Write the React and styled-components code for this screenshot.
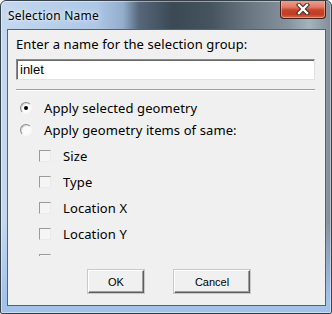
import React from "react";
import styled, { createGlobalStyle } from "styled-components";

const Global = createGlobalStyle`
  html, body { margin: 0; padding: 0; background: #fff; }
  body { width: 332px; height: 314px; overflow: hidden; }
`;

const Window = styled.div`
  box-sizing: border-box;
  width: 332px;
  height: 314px;
  border: 1px solid #36414c;
  border-radius: 6px 6px 2px 2px;
  display: flex;
  flex-direction: column;
  overflow: hidden;
  background:
    linear-gradient(to bottom, rgba(162, 194, 234, 0) 0, rgba(162, 194, 234, 0) 220px, rgba(162, 194, 234, 1) 300px),
    linear-gradient(to right, #c4d8ef 0, #adc7e6 95px, #93aecd 122px, #56677a 138px, #3b4955 172px, #465460 210px, #6b7883 250px, #8794a0 288px, #a7b2bb 308px, #7d8a96 332px);
  box-shadow: inset 0 0 0 1px rgba(255, 255, 255, 0.45);
`;

const TitleBar = styled.div`
  height: 28px;
  flex: none;
  display: flex;
  align-items: center;
  padding-left: 7px;
`;

const Title = styled.span`
  font-family: "Noto Sans", "Open Sans", sans-serif;
  font-size: 12px;
  letter-spacing: 0.2px;
  color: #000;
  text-shadow: 0 0 6px rgba(255, 255, 255, 0.9), 0 0 3px rgba(255, 255, 255, 0.7);
`;

const CloseButton = styled.div`
  margin-left: auto;
  margin-right: 5px;
  margin-top: -1px;
  align-self: flex-start;
  width: 46px;
  height: 19px;
  box-sizing: border-box;
  border: 1px solid #4a1c14;
  border-top: none;
  border-radius: 0 0 4px 4px;
  background: linear-gradient(to bottom, #e9a897 0, #dd7a64 40%, #c7452b 55%, #c23d22 80%, #d8684a 100%);
  box-shadow: inset 0 0 0 1px rgba(255, 200, 190, 0.5);
  display: flex;
  align-items: center;
  justify-content: center;
`;

const Client = styled.div`
  flex: 1;
  margin: 0 5px 7px 6px;
  border: 1px solid #56636f;
  background: #f0f0f0;
  display: flex;
  flex-direction: column;
  padding: 6px 9px 12px 8px;
  font-family: "Noto Sans", "Open Sans", sans-serif;
  color: #000;
`;

const Prompt = styled.div`
  font-size: 13px;
  letter-spacing: 0.1px;
  line-height: 17px;
  height: 17px;
`;

const NameInput = styled.div`
  margin-top: 6px;
  height: 21px;
  width: 299px;
  box-sizing: border-box;
  border: 1px solid;
  border-color: #8a8a8a #e2e2e2 #e2e2e2 #8a8a8a;
  box-shadow: inset 1px 1px 0 #6a6a6a;
  background: #fff;
  font-family: "Liberation Sans", Arial, sans-serif;
  font-size: 13px;
  line-height: 19px;
  padding-left: 3px;
`;

const Separator = styled.div`
  margin-top: 9px;
  width: 299px;
  height: 0;
  border-top: 1px solid #a0a0a0;
  border-bottom: 1px solid #ffffff;
`;

const RadioGroup = styled.div`
  margin-top: 6px;
  display: flex;
  flex-direction: column;
`;

const OptionRow = styled.div`
  flex: none;
  height: ${(p) => p.$h}px;
  display: flex;
  align-items: center;
  padding-left: ${(p) => p.$indent}px;
  font-size: 13px;
  letter-spacing: 0.1px;
`;

const Radio = styled.span`
  width: 12px;
  height: 12px;
  box-sizing: border-box;
  border-radius: 50%;
  border: 1px solid;
  border-color: #8c8c8c #f6f6f6 #f6f6f6 #8c8c8c;
  background: #fbfbfb;
  box-shadow: inset 1px 1px 0 #d8d8d8;
  margin-right: 12px;
  display: flex;
  align-items: center;
  justify-content: center;
  &::after {
    content: "";
    width: 4px;
    height: 4px;
    border-radius: 50%;
    background: ${(p) => (p.$checked ? "#000" : "transparent")};
  }
`;

const CheckList = styled.div`
  margin-top: 2px;
  height: 113px;
  overflow: hidden;
  display: flex;
  flex-direction: column;
  flex: none;
`;

const Checkbox = styled.span`
  width: 12px;
  height: 12px;
  box-sizing: border-box;
  border: 1px solid;
  border-color: #9a9a9a #eaeaea #eaeaea #9a9a9a;
  background: #f5f5f5;
  margin-right: 12px;
  flex: none;
`;

const ButtonRow = styled.div`
  margin-top: 14px;
  display: flex;
  padding-left: 72px;
  gap: 30px;
`;

const Button = styled.div`
  width: ${(p) => p.$w}px;
  height: 23px;
  box-sizing: border-box;
  border: 1px solid;
  border-color: #ffffff #5f5f5f #5f5f5f #ffffff;
  box-shadow: inset -1px -1px 0 #9d9d9d, 0 0 0 1px #c9c9c9;
  background: #f0f0f0;
  display: flex;
  align-items: center;
  justify-content: center;
  font-family: "Liberation Sans", Arial, sans-serif;
  font-size: 11px;
  color: #000;
`;

const checks = ["Size", "Type", "Location X", "Location Y", ""];

export default function App() {
  return (
    <>
      <Global />
      <Window>
        <TitleBar>
          <Title>Selection Name</Title>
          <CloseButton>
            <svg width="14" height="12" viewBox="0 0 14 12">
              <path d="M3 2 L11 10 M11 2 L3 10" stroke="#3a2a28" strokeWidth="4.4" strokeLinecap="square" />
              <path d="M3 2 L11 10 M11 2 L3 10" stroke="#ffffff" strokeWidth="2.4" strokeLinecap="square" />
            </svg>
          </CloseButton>
        </TitleBar>
        <Client>
          <Prompt>Enter a name for the selection group:</Prompt>
          <NameInput>inlet</NameInput>
          <Separator />
          <RadioGroup>
            <OptionRow $h={22} $indent={4}>
              <Radio $checked />
              Apply selected geometry
            </OptionRow>
            <OptionRow $h={22} $indent={4}>
              <Radio />
              Apply geometry items of same:
            </OptionRow>
          </RadioGroup>
          <CheckList>
            {checks.map((c, i) => (
              <OptionRow key={i} $h={26} $indent={23}>
                <Checkbox />
                {c}
              </OptionRow>
            ))}
          </CheckList>
          <ButtonRow>
            <Button $w={56}>OK</Button>
            <Button $w={76}>Cancel</Button>
          </ButtonRow>
        </Client>
      </Window>
    </>
  );
}
